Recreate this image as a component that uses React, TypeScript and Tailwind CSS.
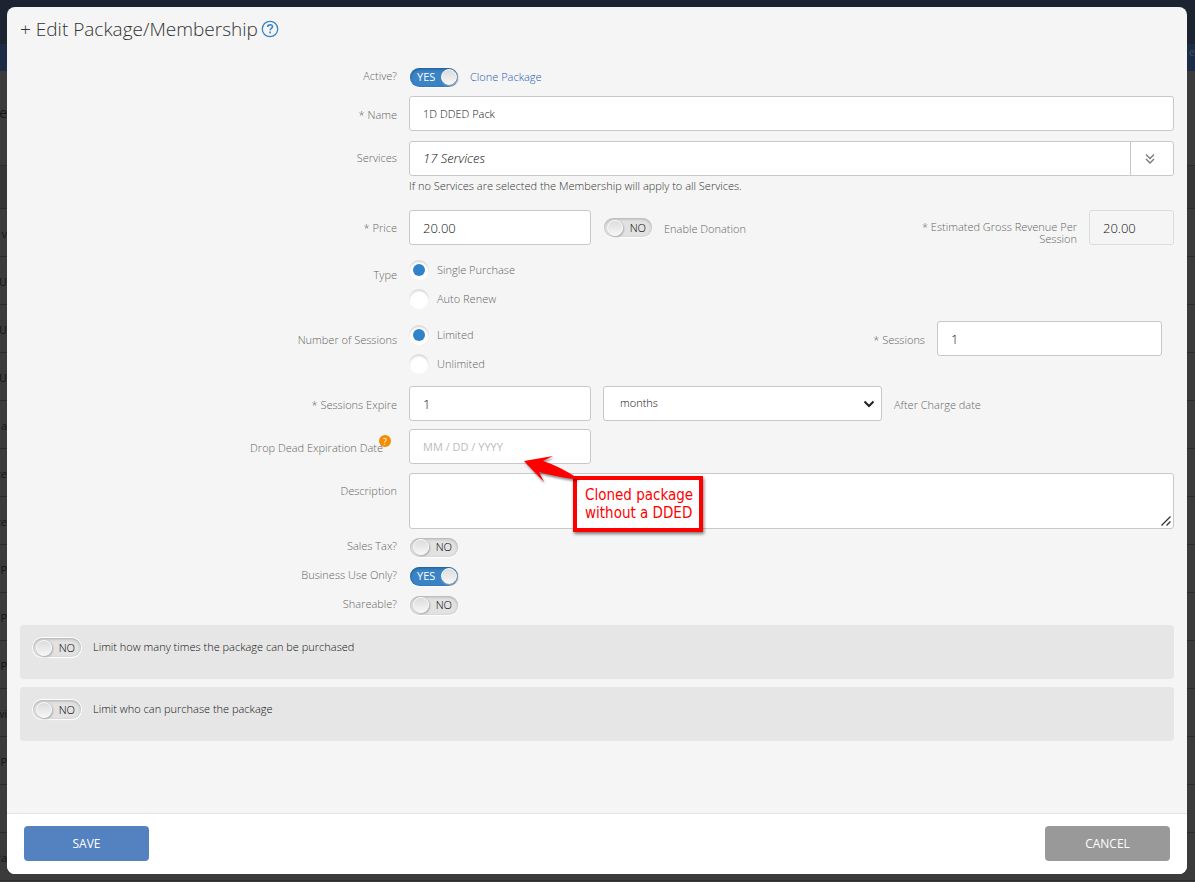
import React, { useState } from "react";

const fieldClass =
  "h-[35px] w-full min-w-0 rounded-[3px] border border-[#c8c8c8] bg-white px-[13px] text-[#111] outline-none placeholder:font-normal placeholder:text-[#bbb]";
const labelClass = "block text-right text-[11px] leading-[18px] text-[#666]";

function Toggle({ id, label, initial = false, ringed = false }: { id: string; label?: string; initial?: boolean; ringed?: boolean }) {
  const [on, setOn] = useState(initial);
  return (
    <label
      htmlFor={id}
      className={`flex h-[19px] w-12 shrink-0 cursor-pointer items-center justify-between rounded-full text-[11px] leading-[18px] ${
        on
          ? "bg-[#3a84c6] pr-px pl-[7px] font-normal text-white shadow-[inset_0_1px_3px_#1d5588,0_1px_1px_#fff]"
          : "bg-[#e2e2e2] pr-[6px] pl-[3px] font-light text-black shadow-[inset_0_1px_3px_#aaa,0_1px_1px_#fff]"
      } ${ringed ? "ring-1 ring-white" : ""}`}
    >
      {on && <span>YES</span>}
      <input
        id={id}
        type="checkbox"
        aria-label={label}
        checked={on}
        onChange={() => setOn(!on)}
        className="size-4 cursor-pointer appearance-none rounded-full border border-[#f8f8f8] bg-linear-to-b from-[#dcdcdc] to-[#f6f6f6] shadow-[1px_1px_2px_#aaa]"
      />
      {!on && <span>NO</span>}
    </label>
  );
}

function Radio({ name, label, checked = false }: { name: string; label: string; checked?: boolean }) {
  return (
    <label className="flex h-5 items-center gap-2 text-[11px] text-[#666]">
      <input
        type="radio"
        name={name}
        defaultChecked={checked}
        className="grid size-5 shrink-0 appearance-none place-items-center rounded-full bg-white shadow-[inset_0_2px_2px_#d8d8d8] before:size-3 before:rounded-full before:bg-[#3182c8] before:opacity-0 checked:before:opacity-100"
      />
      <span>{label}</span>
    </label>
  );
}

function Row({ label, htmlFor, className = "", labelPad = "pt-[10px]", children }: {
  label: React.ReactNode;
  htmlFor?: string;
  className?: string;
  labelPad?: string;
  children: React.ReactNode;
}) {
  return (
    <div className={`grid grid-cols-[minmax(0,377fr)_minmax(0,765fr)] gap-x-3 ${className}`}>
      {htmlFor ? (
        <label htmlFor={htmlFor} className={`${labelClass} ${labelPad}`}>{label}</label>
      ) : (
        <span className={`${labelClass} ${labelPad}`}>{label}</span>
      )}
      {children}
    </div>
  );
}

const listRows = ["v", "U", "U", "U", "a", "te", "te", "P", "P", "P", "wi", "P", "", "Pa"];

function Backdrop() {
  return (
    <div aria-hidden="true" className="absolute inset-0 overflow-hidden bg-[#3b3b3b] text-[11px] font-normal text-[#161616]">
      <div className="flex h-[71px] flex-col">
        <div className="h-11 bg-[#1b2430]" />
        <div className="flex-1 bg-[#1a2c46] text-right text-[#4a4a52]">e</div>
      </div>
      <div className="flex h-[95px] items-center border-b border-[#2c2c2c] text-[14px]">
        <span className="flex w-[7px] justify-end pb-3">e</span>
      </div>
      <div className="h-[43px] border-b border-[#2c2c2c] bg-[#363636]" />
      {listRows.map((t, i) => (
        <div key={i} className="flex h-12 items-center border-b border-[#2c2c2c] pt-1">
          <span className="flex w-[7px] justify-end">{t}</span>
        </div>
      ))}
    </div>
  );
}

function Callout() {
  return (
    <div className="pointer-events-none absolute top-[25px] left-[114px] w-[180px] text-[#f00]">
      <svg viewBox="0 0 60 32" className="block h-8 w-[60px] overflow-visible drop-shadow-[1px_2px_1px_rgba(0,0,0,0.45)]" aria-hidden="true">
        <path d="M1 7 L30 2 L20 7 Q36 12 56 25 L50 25 Q30 22 16 18 L21 28 Z" fill="#f00" />
      </svg>
      <div className="-mt-[10px] ml-[50px] w-[130px] border-4 border-[#f00] bg-white px-2 pt-1.5 pb-[6px] font-['DejaVu_Sans_Condensed',sans-serif] text-[15px] leading-[18px] font-normal whitespace-nowrap shadow-[1px_2px_3px_rgba(0,0,0,0.5)]">
        Cloned package<br />without a DDED
      </div>
    </div>
  );
}

export default function App() {
  return (
    <div className="relative min-h-screen p-[7px] pr-2 pb-2 font-['Open_Sans',sans-serif] text-[11px] font-light">
      <Backdrop />
      <form
        onSubmit={(e) => e.preventDefault()}
        className="relative flex min-h-[calc(100vh-15px)] flex-col overflow-hidden rounded-lg bg-[#f5f5f5]"
      >
        <main className="flex-1 px-[13px] pt-2 pb-[71px]">
          <h1 className="mb-6 flex items-center gap-[3px] text-[19px] leading-7 font-light text-[#333]">
            + Edit Package/Membership
            <a href="#help" aria-label="Help" className="text-[#3a84c6]">
              <svg viewBox="0 0 18 18" className="size-[18px]" fill="none" stroke="currentColor" aria-hidden="true">
                <circle cx="9" cy="9" r="7.7" strokeWidth="1.3" />
                <path d="M6.6 7.1C6.6 5.6 7.6 4.7 9.1 4.7c1.4 0 2.4.8 2.4 2 0 1.7-2.4 1.7-2.4 3.6" strokeWidth="1.5" />
                <path d="M9.1 11.6v1.7" strokeWidth="1.7" />
              </svg>
            </a>
          </h1>

          <Row label="Active?" htmlFor="active" labelPad="">
            <div className="flex h-5 items-center gap-3 pl-px">
              <Toggle id="active" initial />
              <a href="#clone" className="text-[#1c5cb4]">Clone Package</a>
            </div>
          </Row>

          <Row label="* Name" htmlFor="name" className="mt-[9px]">
            <input id="name" defaultValue="1D DDED Pack" className={`${fieldClass} text-[11px]`} />
          </Row>

          <Row label="Services" htmlFor="services" className="mt-2.5" labelPad="pt-2">
            <div>
              <div className="flex h-[35px] overflow-hidden rounded-[3px] border border-[#c8c8c8] bg-white">
                <input id="services" readOnly defaultValue="17 Services" className="min-w-0 flex-1 px-[13px] text-[13px] text-[#111] italic outline-none" />
                <button type="button" aria-label="Show services" className="flex w-[43px] items-center justify-center border-l border-[#c8c8c8] pr-1 text-[#777]">
                  <svg viewBox="0 0 10 12" className="h-3 w-2.5" fill="none" stroke="currentColor" strokeWidth="1.3" aria-hidden="true">
                    <path d="M1 1.5 L5 5.5 L9 1.5 M1 6 L5 10 L9 6" />
                  </svg>
                </button>
              </div>
              <p className="leading-5 text-[#333]">If no Services are selected the Membership will apply to all Services.</p>
            </div>
          </Row>

          <Row label="* Price" htmlFor="price" className="mt-3.5" labelPad="pt-[9px]">
            <div className="flex">
              <div className="w-[182px]"><input id="price" defaultValue="20.00" className={`${fieldClass} text-[13px]`} /></div>
              <div className="flex items-center gap-3 pl-[13px]">
                <Toggle id="donation" label="Enable Donation" />
                <label htmlFor="donation" className="pt-1 text-[#666]">Enable Donation</label>
              </div>
              <label htmlFor="revenue" className="mr-3 ml-auto w-[165px] pt-[11px] text-right leading-3 text-[#666]">* Estimated Gross Revenue Per Session</label>
              <div className="w-[85px]">
                <input id="revenue" readOnly defaultValue="20.00" className="block h-[35px] w-full rounded-[3px] border border-[#dcdcdc] bg-[#f5f5f5] px-[13px] text-[13px] text-[#111] outline-none" />
              </div>
            </div>
          </Row>

          <Row label="Type" className="mt-[15px]" labelPad="pt-1.5">
            <div role="radiogroup" aria-label="Type" className="flex flex-col gap-[9px]">
              <Radio name="type" label="Single Purchase" checked />
              <Radio name="type" label="Auto Renew" />
            </div>
          </Row>

          <Row label="Number of Sessions" className="mt-3">
            <div className="flex justify-between">
              <div role="radiogroup" aria-label="Number of Sessions" className="flex flex-col gap-[9px] pt-1">
                <Radio name="limit" label="Limited" checked />
                <Radio name="limit" label="Unlimited" />
              </div>
              <div className="flex gap-3 pr-3">
                <label htmlFor="sessions" className={`${labelClass} pt-[10px]`}>* Sessions</label>
                <div className="w-[225px]"><input id="sessions" defaultValue="1" className={`${fieldClass} text-[13px]`} /></div>
              </div>
            </div>
          </Row>

          <Row label="* Sessions Expire" htmlFor="expire" className="mt-3">
            <div className="flex gap-3">
              <div className="w-[182px]"><input id="expire" defaultValue="1" className={`${fieldClass} text-[13px]`} /></div>
              <div className="relative w-[279px]">
                <select aria-label="Expiry unit" defaultValue="months" className="h-[35px] w-full appearance-none rounded-[3px] border border-[#c8c8c8] bg-white pr-8 pl-4 text-[11px] text-[#111]">
                  <option>days</option>
                  <option>weeks</option>
                  <option>months</option>
                  <option>years</option>
                </select>
                <svg viewBox="0 0 12 8" className="pointer-events-none absolute top-[14px] right-[7px] h-2 w-3" fill="none" stroke="#222" strokeWidth="2" aria-hidden="true">
                  <path d="M1.5 1.5 L6 6 L10.5 1.5" />
                </svg>
              </div>
              <span className={`${labelClass} pt-[10px]`}>After Charge date</span>
            </div>
          </Row>

          <Row
            htmlFor="dded"
            className="mt-2"
            label={
              <span className="relative pr-3.5">
                Drop Dead Expiration Date
                <span className="absolute -top-[5px] right-1.5 flex size-3 items-center justify-center rounded-full bg-[#f28c00] text-[9px] leading-none font-normal text-white">?</span>
              </span>
            }
          >
            <div className="relative z-10">
              <div className="w-[182px]"><input id="dded" placeholder="MM / DD / YYYY" className={`${fieldClass} text-[11px]`} /></div>
              <Callout />
            </div>
          </Row>

          <Row label="Description" htmlFor="description" className="mt-[9px]" labelPad="pt-[9px]">
            <div className="relative">
              <textarea id="description" className="block h-14 w-full resize-none rounded-[3px] border border-[#c8c8c8] bg-white px-[13px] py-2 text-[11px] outline-none" />
              <svg viewBox="0 0 10 10" className="pointer-events-none absolute right-[3px] bottom-[3px] size-2.5" fill="none" stroke="#333" strokeWidth="1.3" aria-hidden="true">
                <path d="M0.500 9.500 L9.500 0.500 M5.500 9.500 L9.500 5.500" />
              </svg>
            </div>
          </Row>

          <Row label="Sales Tax?" htmlFor="tax" className="mt-2" labelPad="">
            <div className="flex h-5 items-center pl-px"><Toggle id="tax" /></div>
          </Row>
          <Row label="Business Use Only?" htmlFor="business" className="mt-[9px]" labelPad="">
            <div className="flex h-5 items-center pl-px"><Toggle id="business" initial /></div>
          </Row>
          <Row label="Shareable?" htmlFor="share" className="mt-[9px]" labelPad="">
            <div className="flex h-5 items-center pl-px"><Toggle id="share" /></div>
          </Row>

          <div className="mt-2.5 flex flex-col gap-2 text-[#111]">
            <section className="flex h-[54px] items-start gap-3 rounded bg-[#e6e6e6] px-[13px] pt-[13px]">
              <Toggle id="limit-count" ringed />
              <label htmlFor="limit-count" className="leading-[18px]">Limit how many times the package can be purchased</label>
            </section>
            <section className="flex h-[54px] items-start gap-3 rounded bg-[#e6e6e6] px-[13px] pt-[13px]">
              <Toggle id="limit-who" ringed />
              <label htmlFor="limit-who" className="leading-[18px]">Limit who can purchase the package</label>
            </section>
          </div>
        </main>

        <footer className="flex items-start justify-between border-t border-[#e4e4e4] bg-white px-[17px] pt-3 pb-[13px]">
          <button type="submit" className="h-[35px] w-[125px] rounded bg-[#5482c1] text-[12px] font-normal text-white">SAVE</button>
          <button type="button" className="h-[35px] w-[125px] rounded bg-[#999] text-[12px] font-normal text-white">CANCEL</button>
        </footer>
      </form>
    </div>
  );
}
